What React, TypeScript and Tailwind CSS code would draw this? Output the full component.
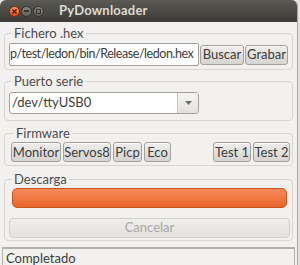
const btn =
  "h-[20px] shrink-0 rounded-[3px] border border-[#a3a19b] bg-gradient-to-b from-[#efeeec] to-[#d6d4d0] shadow-[inset_0_1px_0_#fbfbfb] text-[13px] leading-none text-[#3c3c3c] flex items-center justify-center whitespace-nowrap";

function Group({ title, className, children }: { title: string; className: string; children: React.ReactNode }) {
  return (
    <fieldset className={"border border-[#d8d6d1] rounded-[4px] mx-[4px] " + className}>
      <legend className="ml-[3px] px-[2px] text-[13px] leading-[14px] text-[#4c4c4c]">{title}</legend>
      {children}
    </fieldset>
  );
}

export default function App() {
  return (
    <div
      className="w-[300px] h-[265px] bg-[#e4e3e1] overflow-hidden"
      style={{ fontFamily: 'Lato, "Noto Sans", sans-serif' }}
    >
      <div className="w-[298px] h-[265px] flex flex-col bg-[#f2f1f0] rounded-t-[6px] overflow-hidden border-r border-[#aaa8a3]">
        {/* title bar */}
        <div className="h-[22px] shrink-0 bg-gradient-to-b from-[#5a5954] to-[#3c3b37] flex items-center pl-[9px] gap-[1px]">
          <span className="w-[11px] h-[11px] rounded-full bg-gradient-to-b from-[#f7915f] to-[#dd4814] border border-[#7a2e10] flex items-center justify-center">
            <svg width="5" height="5" viewBox="0 0 5 5">
              <path d="M0.5 0.5l4 4M4.5 0.5l-4 4" stroke="#4a1606" strokeWidth="1.3" />
            </svg>
          </span>
          <span className="w-[11px] h-[11px] rounded-full bg-gradient-to-b from-[#8a8882] to-[#5f5d57] border border-[#35342f] flex items-center justify-center">
            <span className="w-[5px] h-[2px] bg-[#35342f]" />
          </span>
          <span className="w-[11px] h-[11px] rounded-full bg-gradient-to-b from-[#8a8882] to-[#5f5d57] border border-[#35342f] flex items-center justify-center">
            <span className="w-[5px] h-[5px] border border-[#35342f]" />
          </span>
          <span className="ml-[14px] text-[13px] font-bold text-[#dfdbd2] tracking-[0.2px]">PyDownloader</span>
        </div>

        {/* Fichero .hex */}
        <Group title="Fichero .hex" className="mt-[4px] pl-[4px] pt-[3px] pb-[3px]">
          <div className="flex items-center">
            <div className="w-[190px] h-[23px] shrink-0 border border-[#a3a19b] bg-white rounded-[2px] flex items-center overflow-hidden text-[12.5px] tracking-[-0.45px] text-[#3c3c3c] whitespace-nowrap">
              p/test/ledon/bin/Release/ledon.hex
            </div>
            <button className={btn + " w-[44px] ml-[1px]"}>Buscar</button>
            <button className={btn + " w-[43px] ml-[1px]"}>Grabar</button>
          </div>
        </Group>

        {/* Puerto serie */}
        <Group title="Puerto serie" className="mt-[4px] pl-[4px] pt-[4px] pb-[6px]">
          <div className="w-[190px] h-[22px] border border-[#a3a19b] rounded-[3px] bg-white flex overflow-hidden">
            <div className="flex-1 flex items-center pl-[2px] text-[13px] text-[#3c3c3c]">/dev/ttyUSB0</div>
            <div className="w-[21px] border-l border-[#c9c7c2] bg-gradient-to-b from-[#f6f5f4] to-[#e3e1de] flex items-center justify-center">
              <svg width="7" height="4" viewBox="0 0 7 4">
                <path d="M0 0h7L3.5 4z" fill="#6e6e6e" />
              </svg>
            </div>
          </div>
        </Group>

        {/* Firmware */}
        <Group title="Firmware" className="mt-[5px] pl-[6px] pr-[2px] pt-[2px] pb-[3px]">
          <div className="flex items-center gap-[2px]">
            <button className={btn + " w-[50px]"}>Monitor</button>
            <button className={btn + " w-[48px]"}>Servos8</button>
            <button className={btn + " w-[29px]"}>Picp</button>
            <button className={btn + " w-[27px]"}>Eco</button>
            <div className="flex-1" />
            <button className={btn + " w-[38px]"}>Test 1</button>
            <button className={btn + " w-[37px]"}>Test 2</button>
          </div>
        </Group>

        {/* Descarga */}
        <Group title="Descarga" className="mt-[6px] pl-[4px] pr-[2px] pt-[2px] pb-[2px]">
          <div className="flex flex-col gap-[10px]">
            <div className="h-[20px] ml-[3px] mr-[3px] rounded-[5px] border border-[#c9541f] bg-gradient-to-b from-[#f6895a] to-[#e9652c]" />
            <div className="h-[20px] rounded-[4px] border border-[#d2d0cb] bg-gradient-to-b from-[#efeeec] to-[#e3e1de] flex items-center justify-center text-[13px] text-[#a9a7a2]">
              Cancelar
            </div>
          </div>
        </Group>

        {/* status bar */}
        <div className="flex-1 mt-[6px] mx-[2px] border-t-2 border-x border-b border-[#b3b1ac] flex items-center pl-[3px] text-[13px] text-[#3c3c3c]">
          Completado
        </div>
      </div>
    </div>
  );
}
